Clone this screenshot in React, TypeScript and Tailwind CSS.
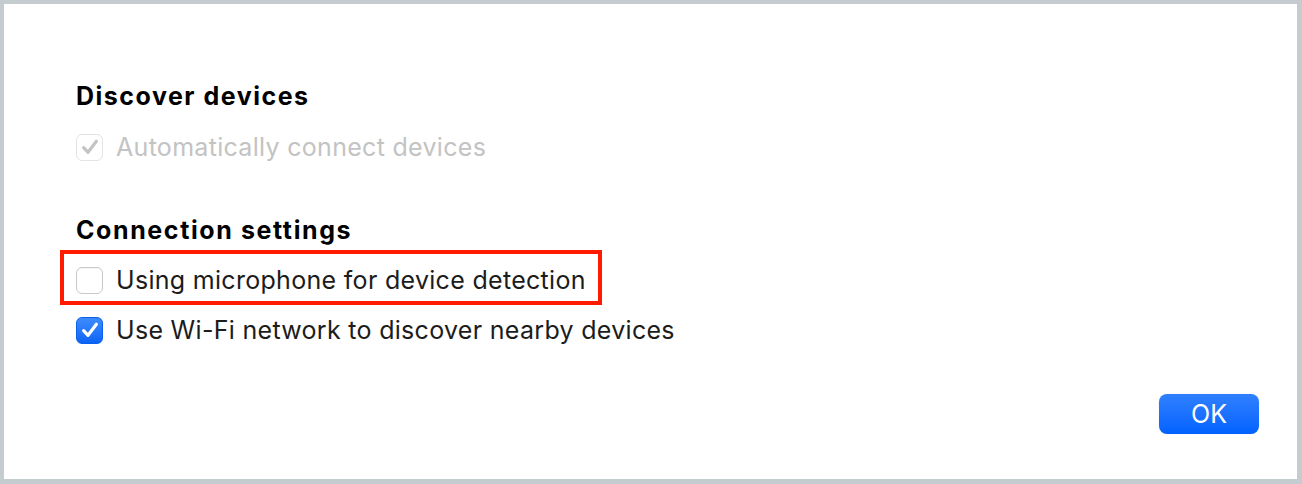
import React, { useState } from 'react';

const Check = ({ color }: { color: string }) => (
    <svg viewBox="0 0 20 20" className="w-[22px] h-[22px]" fill="none">
        <path d="M4.2 10.6 L8.2 14.8 L15.8 4.8" stroke={color} strokeWidth="2.9" strokeLinecap="round" strokeLinejoin="round" />
    </svg>
);

const Row = ({ label, checked, disabled, onToggle }: { label: string; checked: boolean; disabled?: boolean; onToggle?: () => void }) => {
    let box = 'bg-white border border-[#c9c9c9] shadow-[inset_0_1px_1px_rgba(0,0,0,0.04)]';
    if (checked && !disabled) box = 'bg-gradient-to-b from-[#3d8bff] to-[#0a64f5] border border-[#0a60ea]';
    if (disabled) box = 'bg-white border border-[#e3e3e3]';

    return (
        <div className="flex items-center h-[30px] cursor-default" onClick={disabled ? undefined : onToggle}>
            <div className={`w-[27px] h-[27px] rounded-[6px] flex items-center justify-center ${box}`}>
                {checked && <Check color={disabled ? '#c4c4c4' : '#ffffff'} />}
            </div>
            <span className={`ml-[13px] text-[25px] leading-[30px] tracking-[0.3px] ${disabled ? 'text-[#c3c3c3]' : 'text-[#1c1c1c]'}`}>{label}</span>
        </div>
    );
};

export default function App() {
    const [useMic, setUseMic] = useState(false);
    const [useWifi, setUseWifi] = useState(true);

    return (
        <div className="w-[1302px] h-[484px] bg-[#c5ccd0] pt-[4px] pl-[4px] pr-[5px] pb-[5px] font-['Inter',sans-serif]">
            <div className="w-full h-full bg-white flex flex-col pl-[72px] pr-[38px] pt-[77px]">
                <h2 className="text-[25px] leading-[30px] font-bold tracking-[1.5px] text-black">Discover devices</h2>
                <div className="mt-[21px]">
                    <Row label="Automatically connect devices" checked disabled />
                </div>

                <h2 className="mt-[53px] text-[25px] leading-[30px] font-bold tracking-[1.6px] text-black">Connection settings</h2>

                {/* highlighted row */}
                <div className="relative mt-[20px]">
                    <Row label="Using microphone for device detection" checked={useMic} onToggle={() => setUseMic(!useMic)} />
                    <div className="absolute left-[-16px] top-[-15px] w-[542px] h-[55px] border-[4px] border-[#ff1a00] pointer-events-none" />
                </div>
                <div className="mt-[20px]">
                    <Row label="Use Wi-Fi network to discover nearby devices" checked={useWifi} onToggle={() => setUseWifi(!useWifi)} />
                </div>

                <div className="flex justify-end mt-[49px]">
                    <button className="w-[100px] h-[40px] rounded-[8px] bg-gradient-to-b from-[#2f80ff] to-[#0062ff] text-white text-[25px] leading-none shadow-[0_0_1px_rgba(0,0,0,0.2)]">
                        OK
                    </button>
                </div>
            </div>
        </div>
    );
}
